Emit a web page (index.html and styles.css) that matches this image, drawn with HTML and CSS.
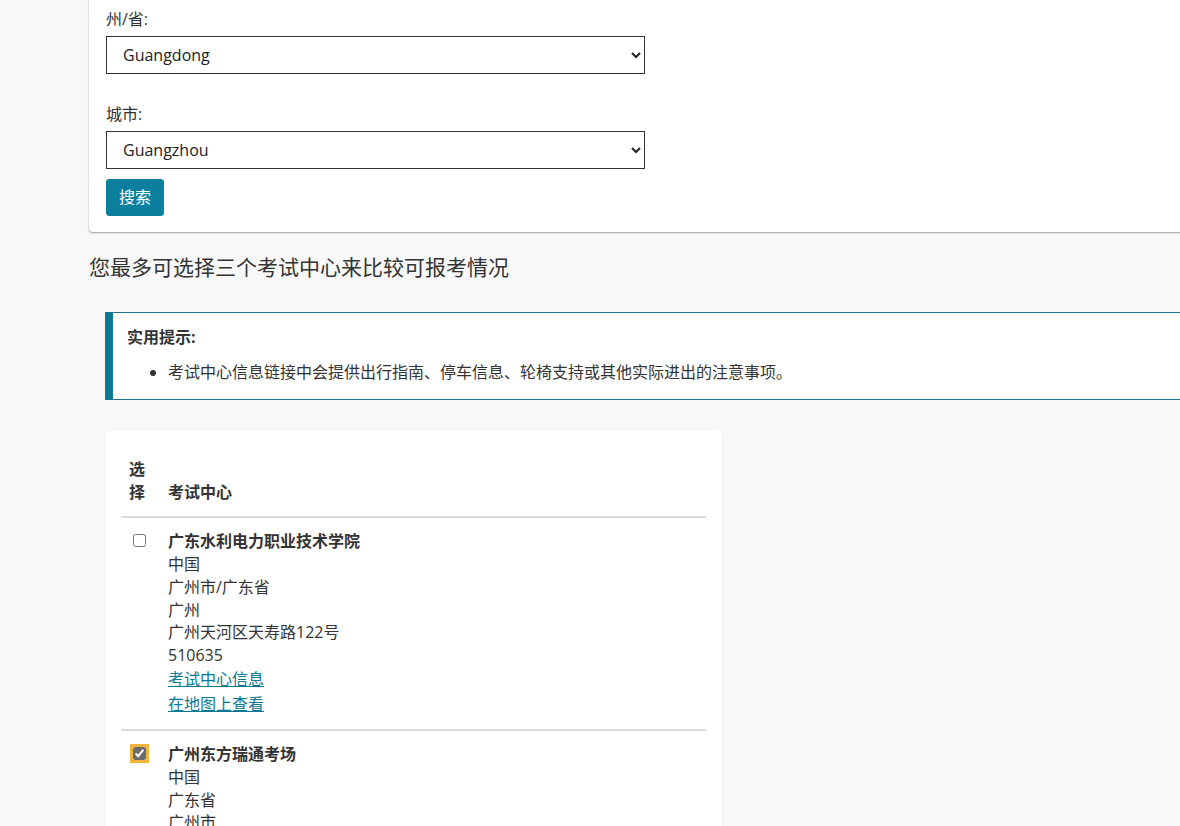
FILE: index.html
```html
<!DOCTYPE html>
<html lang="zh-CN">
<head>
<meta charset="utf-8">
<title>考试中心搜索</title>
<link rel="stylesheet" href="styles.css">
</head>
<body>
<div class="page">
  <form class="card search-card">
    <label class="field-label" for="state">州/省:</label>
    <select id="state" class="field-select">
      <option>Guangdong</option>
    </select>
    <label class="field-label field-label-gap" for="city">城市:</label>
    <select id="city" class="field-select">
      <option>Guangzhou</option>
    </select>
    <button type="button" class="btn-search">搜索</button>
  </form>

  <h2 class="intro">您最多可选择三个考试中心来比较可报考情况</h2>

  <div class="content">
    <div class="tip">
      <p class="tip-title">实用提示:</p>
      <ul class="tip-list">
        <li>考试中心信息链接中会提供出行指南、停车信息、轮椅支持或其他实际进出的注意事项。</li>
      </ul>
    </div>

    <div class="card results-card">
      <table class="centers">
        <thead>
          <tr>
            <th class="col-sel">选择</th>
            <th class="col-name">考试中心</th>
          </tr>
        </thead>
        <tbody>
          <tr>
            <td class="col-sel"><input type="checkbox" class="check" aria-label="选择"></td>
            <td class="col-name">
              <div class="center-name">广东水利电力职业技术学院</div>
              <div>中国</div>
              <div>广州市/广东省</div>
              <div>广州</div>
              <div>广州天河区天寿路122号</div>
              <div>510635</div>
              <a class="center-link" href="#">考试中心信息</a><br>
              <a class="center-link" href="#">在地图上查看</a>
            </td>
          </tr>
          <tr>
            <td class="col-sel"><input type="checkbox" class="check check-focus" checked aria-label="选择"></td>
            <td class="col-name">
              <div class="center-name">广州东方瑞通考场</div>
              <div>中国</div>
              <div>广东省</div>
              <div>广州市</div>
              <div>广州天河区</div>
              <div>510000</div>
              <a class="center-link" href="#">考试中心信息</a><br>
              <a class="center-link" href="#">在地图上查看</a>
            </td>
          </tr>
        </tbody>
      </table>
    </div>
  </div>
</div>
</body>
</html>
```

FILE: styles.css
```css
html, body {
  margin: 0;
  padding: 0;
}

body {
  background: #f8f8f8;
  color: #333;
  font-family: "Open Sans", "Noto Sans CJK SC", sans-serif;
  font-size: 16px;
  line-height: 1.428571;
  overflow: hidden;
}

.page {
  width: 1400px;
  padding-left: 89px;
}

.card {
  background: #fff;
}

.search-card {
  display: flex;
  flex-direction: column;
  align-items: flex-start;
  padding: 8px 16px 16px 17px;
  border-radius: 0 0 4px 4px;
  box-shadow: 0 1px 2px rgba(0, 0, 0, 0.35), 0 0 1px rgba(0, 0, 0, 0.12);
}

.field-label {
  display: block;
  margin-bottom: 5px;
  color: #333;
}

.field-label-gap {
  margin-top: 29px;
}

.field-select {
  width: 539px;
  height: 38px;
  padding: 0 8px 0 12px;
  border: 1px solid #333;
  border-radius: 0;
  background: #fff;
  color: #222;
  font-family: "Open Sans", "Noto Sans CJK SC", sans-serif;
  font-size: 16px;
}

.btn-search {
  margin-top: 10px;
  padding: 6px 12px;
  border: 1px solid #0a7f9e;
  border-radius: 3px;
  background: #0a7f9e;
  color: #fff;
  font-family: "Open Sans", "Noto Sans CJK SC", sans-serif;
  font-size: 16px;
  line-height: 23px;
  cursor: pointer;
}

.intro {
  margin: 22px 0 31px;
  font-size: 21px;
  font-weight: normal;
  line-height: 27px;
  color: #333;
}

.content {
  margin-left: 16px;
}

.tip {
  background: #fff;
  border-top: 1px solid #1b7489;
  border-bottom: 1px solid #1b7489;
  border-left: 8px solid #0e7a95;
  padding: 13px 14px 16px 14px;
}

.tip-title {
  margin: 0 0 12px;
  font-weight: bold;
}

.tip-list {
  margin: 0;
  padding-left: 41px;
}

.results-card {
  width: 585px;
  margin-top: 30px;
  padding: 16px;
  border-radius: 6px;
  box-shadow: 0 1px 3px rgba(0, 0, 0, 0.08);
}

.centers {
  width: 100%;
  border-collapse: collapse;
}

.centers th {
  padding: 12px 8px;
  text-align: left;
  vertical-align: bottom;
  font-weight: bold;
  border-bottom: 2px solid #dcdcdc;
}

.centers td {
  padding: 12px 8px 12px 8px;
  vertical-align: top;
  border-bottom: 2px solid #dcdcdc;
}

.centers th.col-sel,
.centers td.col-sel {
  width: 23px;
}

.center-name {
  font-weight: bold;
}

.check {
  display: block;
  width: 13px;
  height: 13px;
  margin: 4px 0 0 4px;
  accent-color: #6b6b6b;
}

.check-focus {
  outline: 3px solid #f0b43c;
  outline-offset: 0;
}

.center-link {
  display: inline-block;
  padding: 1px 0;
  color: #0b7896;
  text-decoration: underline;
}
```
